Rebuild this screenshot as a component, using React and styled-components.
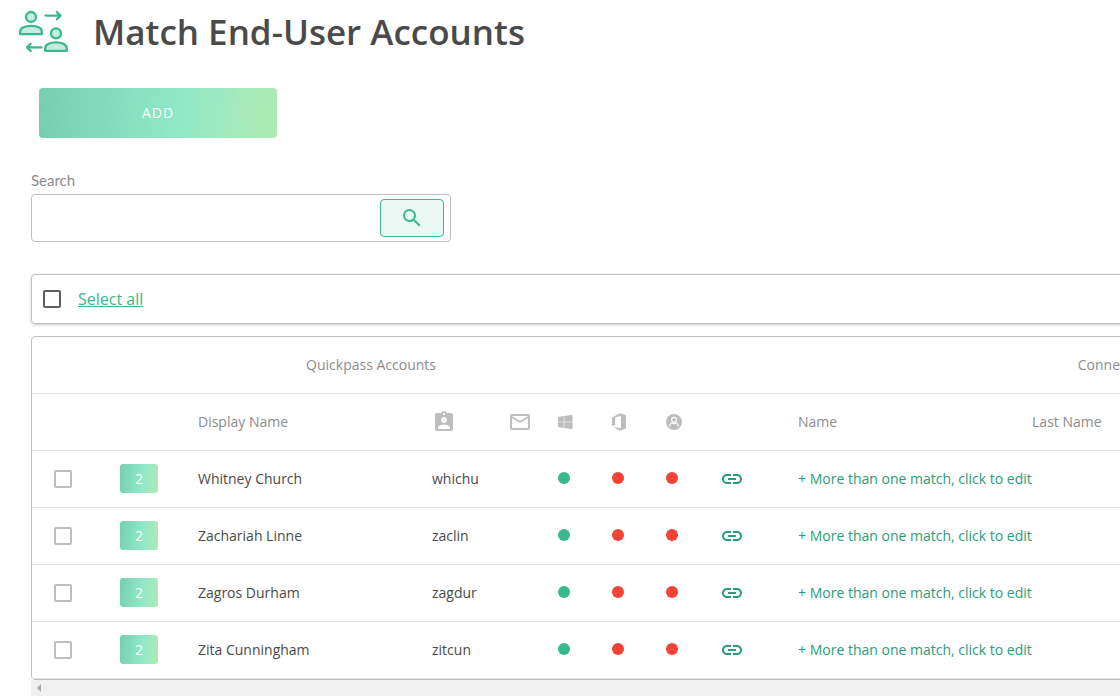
import React, { useState } from 'react';
import styled, { css, createGlobalStyle } from 'styled-components';
import { MdSearch, MdMailOutline, MdAssignmentInd, MdLink } from 'react-icons/md';

const GlobalStyle = createGlobalStyle`
  * {
    box-sizing: border-box;
  }
  body {
    margin: 0;
    background: #fff;
    color: #4a4a4a;
    font-family: 'Open Sans', 'Noto Sans', sans-serif;
    font-size: 14px;
  }
`;

const gradient = css`
  background: linear-gradient(97deg, #74cfb0 0%, #90e8c8 58%, #b0eab2 100%);
`;

const Page = styled.main`
  overflow: hidden;
`;

const Header = styled.header`
  display: flex;
  align-items: center;
  gap: 23px;
  height: 64px;
  padding-left: 18px;
`;

const Title = styled.h1`
  margin: 0;
  font-size: 35px;
  line-height: 48px;
  font-weight: 600;
  color: #4a4a4a;
  white-space: nowrap;
`;

const AddButton = styled.button`
  ${gradient}
  display: block;
  width: 238px;
  height: 50px;
  margin: 24px 0 32px 39px;
  padding: 0 0 2px;
  border: 0;
  border-radius: 4px;
  color: #fff;
  font: inherit;
  letter-spacing: 1px;
  cursor: pointer;
`;

const SearchForm = styled.form`
  margin: 0 0 32px 31px;
`;

const SearchLabel = styled.label`
  display: block;
  line-height: 20px;
  margin-bottom: 4px;
  font-family: Lato, sans-serif;
  font-size: 15px;
  color: #8c8c8c;
`;

const SearchBox = styled.div`
  display: flex;
  align-items: center;
  width: 420px;
  height: 48px;
  padding-right: 6px;
  border: 1px solid #c0c0c0;
  border-radius: 4px;
`;

const SearchInput = styled.input`
  flex: 1;
  height: 40px;
  padding: 0 12px;
  border: 0;
  outline: none;
  background: transparent;
  font: inherit;
`;

const SearchButton = styled.button`
  display: flex;
  align-items: center;
  justify-content: center;
  width: 64px;
  height: 38px;
  padding: 0;
  border: 1px solid #38b88c;
  border-radius: 4px;
  background: #ebf7f3;
  color: #38b88c;
  cursor: pointer;
`;

const Content = styled.section`
  min-width: 1580px;
  padding-left: 31px;
`;

const SelectBar = styled.div`
  display: flex;
  align-items: center;
  gap: 17px;
  height: 50px;
  margin-bottom: 12px;
  padding-left: 11px;
  border: 1px solid #c0c0c0;
  border-radius: 4px;
  box-shadow: 0 1px 3px rgba(0, 0, 0, 0.2);
`;

const Checkbox = styled.input.attrs({ type: 'checkbox' })`
  appearance: none;
  display: block;
  width: 18px;
  height: 18px;
  margin: 0;
  border: 2px solid ${props => (props.$dark ? '#5f5f5f' : '#bdbdbd')};
  border-radius: 2px;
  cursor: pointer;
  &:checked {
    background: #38b88c;
    border-color: #38b88c;
  }
`;

const SelectAll = styled.label`
  font-size: 16px;
  color: #38b88c;
  text-decoration: underline;
  cursor: pointer;
`;

const TableCard = styled.div`
  border: 1px solid #bdbdbd;
  border-radius: 4px;
`;

const Table = styled.table`
  width: 100%;
  table-layout: fixed;
  border-collapse: separate;
  border-spacing: 0;

  th,
  td {
    height: 57px;
    border-bottom: 1px solid #e0e0e0;
    white-space: nowrap;
  }
`;

const Col = styled.col`
  width: ${props => (props.$width ? `${props.$width}px` : 'auto')};
`;

const Th = styled.th`
  padding: 0 0 ${props => (props.$icon ? 0 : 2)}px ${props => (props.$center ? 0 : 14)}px;
  font-weight: 400;
  color: #8c8c8c;
  text-align: ${props => (props.$center ? 'center' : 'left')};

  svg {
    display: block;
    color: #bdbdbd;
  }
`;

const Td = styled.td`
  padding: 0 0 ${props => (props.$icon ? 0 : 2)}px ${props => props.$pad || 14}px;
`;

const Count = styled.span`
  ${gradient}
  display: block;
  width: 38px;
  border-radius: 3px;
  line-height: 29px;
  text-align: center;
  color: #fff;
`;

const Dot = styled.span`
  display: block;
  width: 12px;
  height: 12px;
  border-radius: 50%;
  background: ${props => (props.$on ? '#38b88c' : '#f44336')};
`;

const IconButton = styled.button`
  display: block;
  padding: 0;
  border: 0;
  background: none;
  color: #2a9d78;
  cursor: pointer;

  svg {
    display: block;
  }
`;

const EditLink = styled.a`
  color: #2a9d78;
  text-decoration: none;
`;

const ScrollTrack = styled.div`
  display: flex;
  align-items: center;
  height: 16px;
  padding-left: 6px;
  background: #f0f0f0;
`;

const ScrollArrow = styled.span`
  border: 4px solid transparent;
  border-left-width: 0;
  border-right-color: #a3a3a3;
`;

function MatchIcon() {
  return (
    <svg width="52" height="44" viewBox="0 0 52 44" fill="none" stroke="#38b88c" strokeWidth="2.300" strokeLinecap="round" strokeLinejoin="round" aria-hidden="true">
      <g fill="#c8ebdf">
        <circle cx="13" cy="7" r="5" />
        <path d="M2.200 24.200v-2.700c0-3.500 4.800-5.700 10.800-5.700s10.800 2.200 10.800 5.700v2.700z" />
        <circle cx="38" cy="23.300" r="5" />
        <path d="M27.200 40.800v-2.700c0-3.500 4.800-5.700 10.800-5.700s10.800 2.200 10.800 5.700v2.700z" />
      </g>
      <path d="M27.500 5.600h14.500M38.800 2l3.700 3.600-3.700 3.600" />
      <path d="M23.500 37.400H9M12.700 33.800L9 37.400l3.700 3.600" />
    </svg>
  );
}

function WindowsIcon() {
  return (
    <svg width="15" height="16" viewBox="0 0 15 16" fill="currentColor" role="img" aria-label="Windows">
      <path d="M0 3l5.800-.9v5.700H0zM6.300 2L14.500.8v7H6.300zM0 8.300h5.800V14L0 13.100zM6.300 8.300h8.200v7L6.300 14.100z" />
    </svg>
  );
}

function OfficeIcon() {
  return (
    <svg width="15" height="18" viewBox="0 0 15 18" fill="currentColor" role="img" aria-label="Office">
      <path d="M0 13.200V4.500L7.800.2 14 2.300v13.200l-6.200 2.300L1.500 14.300l7.500.7V3L3.200 4.600v7.200z" />
    </svg>
  );
}

function AccountIcon() {
  return (
    <svg width="16" height="16" viewBox="0 0 16 16" role="img" aria-label="Account">
      <circle cx="8" cy="8" r="8" fill="currentColor" />
      <g fill="none" stroke="#fff" strokeWidth="1.100" strokeLinecap="round">
        <circle cx="8" cy="5.800" r="2.400" />
        <path d="M3.500 11.800c.4-1.800 1.400-2.800 3-3.400M12.500 11.800c-.4-1.800-1.400-2.800-3-3.400M6.600 9.200c.9.500 1.900.5 2.800 0" />
      </g>
    </svg>
  );
}

const widths = [62, 90, 234, 76, 50, 54, 54, 58, 74, 234, null];

const users = [
  { name: 'Whitney Church', login: 'whichu' },
  { name: 'Zachariah Linne', login: 'zaclin' },
  { name: 'Zagros Durham', login: 'zagdur' },
  { name: 'Zita Cunningham', login: 'zitcun' },
];

function UserRow({ name, login, checked, onToggle }) {
  return (
    <tr>
      <Td $icon $pad={22}>
        <Checkbox aria-label={`Select ${name}`} checked={checked} onChange={onToggle} />
      </Td>
      <Td $pad={26}>
        <Count>2</Count>
      </Td>
      <Td>{name}</Td>
      <Td>{login}</Td>
      <Td />
      <Td>
        <Dot $on />
      </Td>
      <Td>
        <Dot />
      </Td>
      <Td>
        <Dot />
      </Td>
      <Td $icon $pad={10}>
        <IconButton type="button" aria-label={`Link ${name}`}>
          <MdLink size={24} />
        </IconButton>
      </Td>
      <Td colSpan={2}>
        <EditLink href="#edit">+ More than one match, click to edit</EditLink>
      </Td>
    </tr>
  );
}

function App() {
  const [selected, setSelected] = useState([]);

  const onToggle = login => {
    setSelected(
      selected.includes(login)
        ? selected.filter(item => item !== login)
        : selected.concat(login)
    );
  };

  const allSelected = selected.length === users.length;

  const onToggleAll = () => {
    setSelected(allSelected ? [] : users.map(user => user.login));
  };

  return (
    <Page>
      <GlobalStyle />
      <Header>
        <MatchIcon />
        <Title>Match End-User Accounts</Title>
      </Header>
      <AddButton type="button">ADD</AddButton>
      <SearchForm onSubmit={e => e.preventDefault()}>
        <SearchLabel htmlFor="search">Search</SearchLabel>
        <SearchBox>
          <SearchInput id="search" type="text" />
          <SearchButton type="submit" aria-label="Search">
            <MdSearch size={24} />
          </SearchButton>
        </SearchBox>
      </SearchForm>
      <Content>
        <SelectBar>
          <Checkbox id="all" $dark checked={allSelected} onChange={onToggleAll} />
          <SelectAll htmlFor="all">Select all</SelectAll>
        </SelectBar>
        <TableCard>
          <Table>
            <colgroup>
              {widths.map((width, i) => (
                <Col key={i} $width={width} />
              ))}
            </colgroup>
            <thead>
              <tr>
                <Th $center colSpan={8}>Quickpass Accounts</Th>
                <Th $center colSpan={3}>Connected Accounts</Th>
              </tr>
              <tr>
                <Th />
                <Th />
                <Th>Display Name</Th>
                <Th $icon>
                  <MdAssignmentInd size={24} />
                </Th>
                <Th $icon>
                  <MdMailOutline size={24} />
                </Th>
                <Th $icon>
                  <WindowsIcon />
                </Th>
                <Th $icon>
                  <OfficeIcon />
                </Th>
                <Th $icon>
                  <AccountIcon />
                </Th>
                <Th />
                <Th>Name</Th>
                <Th>Last Name</Th>
              </tr>
            </thead>
            <tbody>
              {users.map(user => (
                <UserRow
                  key={user.login}
                  name={user.name}
                  login={user.login}
                  checked={selected.includes(user.login)}
                  onToggle={() => onToggle(user.login)}
                />
              ))}
            </tbody>
          </Table>
        </TableCard>
        <ScrollTrack aria-hidden="true">
          <ScrollArrow />
        </ScrollTrack>
      </Content>
    </Page>
  );
}

export default App;
